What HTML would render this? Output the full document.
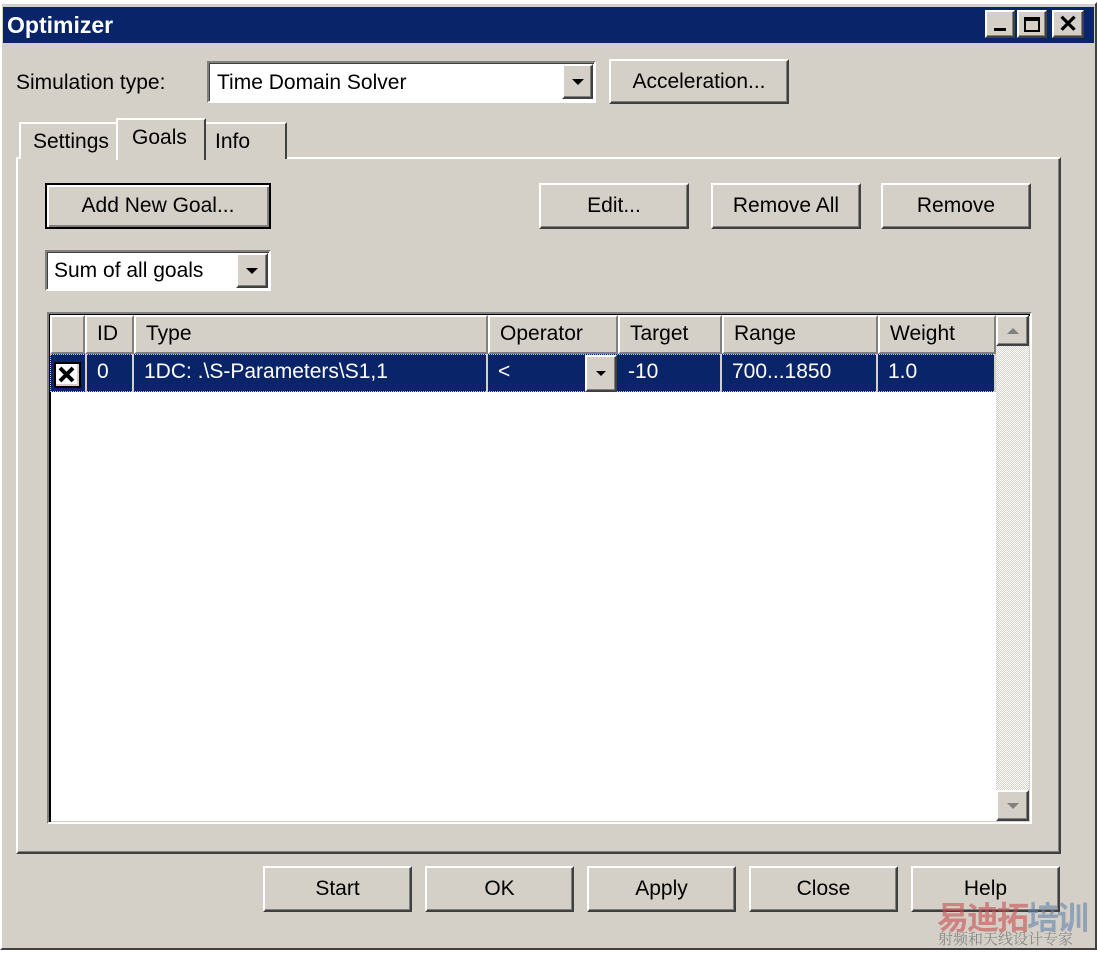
<!DOCTYPE html><html><head><style>
*{box-sizing:border-box;margin:0;padding:0}
body{width:1097px;height:954px;background:#fff;font-family:"Liberation Sans",sans-serif;font-size:21px;color:#000;position:relative;overflow:hidden}
.a{position:absolute}
.win{left:0;top:2px;width:1097px;height:948px;background:#d4d0c8;border-top:2px solid #fff;border-left:2px solid #fff;border-right:2px solid #404040;border-bottom:2px solid #404040}
.btn{position:absolute;background:#d4d0c8;border-top:2px solid #fff;border-left:2px solid #fff;border-right:2px solid #404040;border-bottom:2px solid #404040;box-shadow:inset -1px -1px 0 #808080;text-align:center;display:flex;align-items:center;justify-content:center}
.sunk{position:absolute;background:#fff;border-top:2px solid #808080;border-left:2px solid #808080;border-right:2px solid #fff;border-bottom:2px solid #fff;box-shadow:inset 1px 1px 0 #404040}
.arr{width:0;height:0;border-left:6px solid transparent;border-right:6px solid transparent;border-top:6px solid #000}
.hd{position:absolute;top:0;height:39px;background:#d4d0c8;border-right:2px solid #808080;border-bottom:2px solid #808080;border-left:2px solid #fff;border-top:2px solid #fff;padding-left:10px;line-height:33px}
.cell{position:absolute;top:0;height:38px;color:#fff;padding-left:10px;line-height:36px;border-right:2px solid #d4d0c8}
</style></head><body>
<div class="a win"></div>
<div class="a" style="left:3px;top:7px;width:1091px;height:36px;background:#0a246a"></div>
<div class="a" style="left:7px;top:12px;color:#fff;font-weight:bold;font-size:23px">Optimizer</div>
<div class="btn" style="left:985px;top:10px;width:30px;height:28px;align-items:flex-end;padding-bottom:5px"><div style="width:12px;height:3px;background:#000"></div></div>
<div class="btn" style="left:1017px;top:10px;width:30px;height:28px"><div style="width:16px;height:15px;border:2px solid #000;border-top-width:4px"></div></div>
<div class="btn" style="left:1052px;top:10px;width:32px;height:28px;font-size:24px;font-weight:bold">✕</div>

<div class="a" style="left:16px;top:71px">Simulation type:</div>
<div class="sunk" style="left:207px;top:61px;width:389px;height:42px"></div>
<div class="a" style="left:217px;top:71px">Time Domain Solver</div>
<div class="btn" style="left:562px;top:64px;width:31px;height:35px"><div class="arr"></div></div>
<div class="btn" style="left:609px;top:59px;width:180px;height:45px">Acceleration...</div>

<div class="a" style="left:16px;top:157px;width:1045px;height:697px;border-top:2px solid #fff;border-left:2px solid #fff;border-right:2px solid #404040;border-bottom:2px solid #404040;box-shadow:inset -1px -1px 0 #808080"></div>
<div class="a" style="left:19px;top:122px;width:98px;height:37px;background:#d4d0c8;border-top:2px solid #fff;border-left:2px solid #fff;border-right:1px solid #808080;padding:6px 0 0 12px">Settings</div>
<div class="a" style="left:205px;top:122px;width:82px;height:37px;background:#d4d0c8;border-top:2px solid #fff;border-right:2px solid #404040;padding:6px 0 0 10px">Info</div>
<div class="a" style="left:116px;top:118px;width:90px;height:42px;background:#d4d0c8;border-top:2px solid #fff;border-left:2px solid #fff;border-right:2px solid #404040;padding:6px 0 0 14px">Goals</div>

<div class="btn" style="left:45px;top:183px;width:226px;height:46px;border:2px solid #000;box-shadow:inset 2px 2px 0 #fff,inset -2px -2px 0 #808080">Add New Goal...</div>
<div class="btn" style="left:539px;top:183px;width:150px;height:46px">Edit...</div>
<div class="btn" style="left:711px;top:183px;width:150px;height:46px">Remove All</div>
<div class="btn" style="left:881px;top:183px;width:150px;height:46px">Remove</div>

<div class="sunk" style="left:45px;top:250px;width:226px;height:41px"></div>
<div class="a" style="left:54px;top:259px">Sum of all goals</div>
<div class="btn" style="left:236px;top:253px;width:32px;height:35px"><div class="arr"></div></div>

<div class="a" style="left:47px;top:312px;width:985px;height:512px;background:#fff;border-top:2px solid #808080;border-left:2px solid #808080;border-right:2px solid #fff;border-bottom:2px solid #fff;box-shadow:inset 2px 2px 0 #000,inset -1px -1px 0 #d4d0c8"></div>
<div class="a" style="left:50px;top:315px;width:946px;height:39px">
<div class="hd" style="left:0;width:35px"></div>
<div class="hd" style="left:35px;width:49px">ID</div>
<div class="hd" style="left:84px;width:354px">Type</div>
<div class="hd" style="left:438px;width:130px">Operator</div>
<div class="hd" style="left:568px;width:104px">Target</div>
<div class="hd" style="left:672px;width:156px">Range</div>
<div class="hd" style="left:828px;width:118px">Weight</div>
</div>
<div class="a" style="left:50px;top:354px;width:946px;height:38px;background:#0a246a;outline:1px dotted #e8c070;outline-offset:-1px">
<div class="a" style="left:4px;top:8px;width:27px;height:26px;background:#fff;border:2px solid #000;box-shadow:inset -2px -2px 0 #d4d0c8"><svg width="23" height="22" style="position:absolute;left:0;top:0"><path d="M4 4L17 17M17 4L4 17" stroke="#000" stroke-width="4"/></svg></div>
<div class="cell" style="left:35px;width:49px;border-left:2px solid #d4d0c8">0</div>
<div class="cell" style="left:84px;width:354px">1DC: .\S-Parameters\S1,1</div>
<div class="cell" style="left:438px;width:130px;border-right:none">&lt;</div>
<div class="btn" style="left:535px;top:1px;width:32px;height:37px"><div class="arr" style="border-left-width:5px;border-right-width:5px;border-top-width:5px"></div></div>
<div class="cell" style="left:568px;width:104px">-10</div>
<div class="cell" style="left:672px;width:156px">700...1850</div>
<div class="cell" style="left:828px;width:118px">1.0</div>
</div>
<div class="a" style="left:996px;top:315px;width:33px;height:506px;background:repeating-conic-gradient(#fff 0 25%,#d4d0c8 0 50%) 0 0/2px 2px"></div>
<div class="btn" style="left:996px;top:315px;width:33px;height:31px"><div class="arr" style="border-top:none;border-bottom:6px solid #808080"></div></div>
<div class="btn" style="left:996px;top:790px;width:33px;height:31px"><div class="arr" style="border-top-color:#808080"></div></div>

<div class="btn" style="left:263px;top:866px;width:149px;height:46px">Start</div>
<div class="btn" style="left:425px;top:866px;width:149px;height:46px">OK</div>
<div class="btn" style="left:587px;top:866px;width:149px;height:46px">Apply</div>
<div class="btn" style="left:749px;top:866px;width:149px;height:46px">Close</div>
<div class="btn" style="left:911px;top:866px;width:149px;height:46px">Help</div>
<div class="a" style="left:937px;top:893px;font-family:'Liberation Sans','Noto Sans CJK SC',sans-serif;font-size:32px;font-weight:bold;color:rgba(200,80,80,.6);letter-spacing:-2px">易迪拓<span style="color:rgba(100,130,170,.6)">培训</span></div>
<div class="a" style="left:938px;top:928px;font-family:'Liberation Sans','Noto Serif CJK SC',sans-serif;font-size:15px;color:#888">射频和天线设计专家</div>
</body></html>
